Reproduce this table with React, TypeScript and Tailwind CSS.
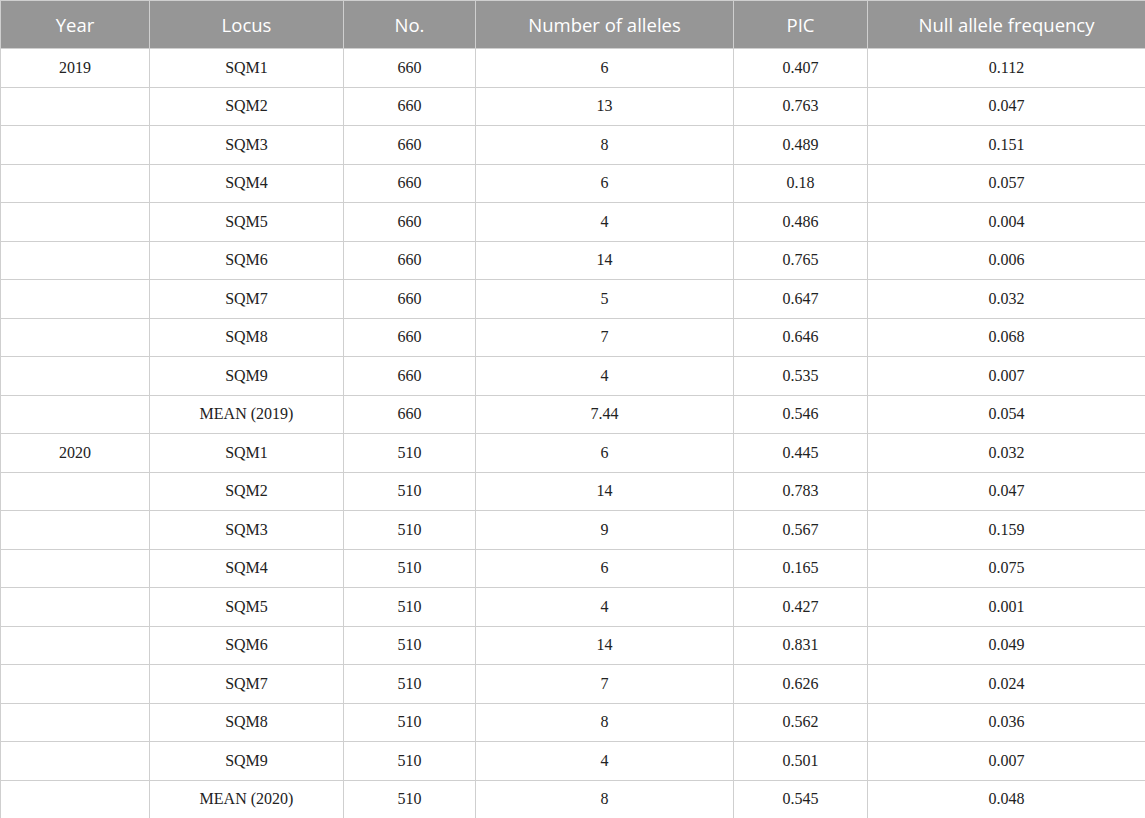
const cols = [
  { label: "Year", w: "w-[149px]" },
  { label: "Locus", w: "w-[194px]" },
  { label: "No.", w: "w-[132px]" },
  { label: "Number of alleles", w: "w-[258px]" },
  { label: "PIC", w: "w-[134px]" },
  { label: "Null allele frequency", w: "w-[278px]" },
];

type Row = [string, string, string, string, string, string];

const rows: Row[] = [
  ["2019", "SQM1", "660", "6", "0.407", "0.112"],
  ["", "SQM2", "660", "13", "0.763", "0.047"],
  ["", "SQM3", "660", "8", "0.489", "0.151"],
  ["", "SQM4", "660", "6", "0.18", "0.057"],
  ["", "SQM5", "660", "4", "0.486", "0.004"],
  ["", "SQM6", "660", "14", "0.765", "0.006"],
  ["", "SQM7", "660", "5", "0.647", "0.032"],
  ["", "SQM8", "660", "7", "0.646", "0.068"],
  ["", "SQM9", "660", "4", "0.535", "0.007"],
  ["", "MEAN (2019)", "660", "7.44", "0.546", "0.054"],
  ["2020", "SQM1", "510", "6", "0.445", "0.032"],
  ["", "SQM2", "510", "14", "0.783", "0.047"],
  ["", "SQM3", "510", "9", "0.567", "0.159"],
  ["", "SQM4", "510", "6", "0.165", "0.075"],
  ["", "SQM5", "510", "4", "0.427", "0.001"],
  ["", "SQM6", "510", "14", "0.831", "0.049"],
  ["", "SQM7", "510", "7", "0.626", "0.024"],
  ["", "SQM8", "510", "8", "0.562", "0.036"],
  ["", "SQM9", "510", "4", "0.501", "0.007"],
  ["", "MEAN (2020)", "510", "8", "0.545", "0.048"],
];

export default function App() {
  return (
    <div className="w-[1145px] h-[818px] bg-white overflow-hidden">
      <table className="w-[1145px] table-fixed border-collapse">
        <thead>
          <tr className="h-[48px] bg-[#969696]">
            {cols.map((c) => (
              <th
                key={c.label}
                className={`${c.w} border border-[#cfcfcf] text-center align-middle font-normal text-[18.5px] text-white font-['Open_Sans','Noto_Sans',sans-serif]`}
              >
                {c.label}
              </th>
            ))}
          </tr>
        </thead>
        <tbody>
          {rows.map((r, i) => (
            <tr key={i} className="h-[38.5px]">
              {r.map((cell, j) => (
                <td
                  key={j}
                  className="border border-[#cfcfcf] text-center align-middle text-[16px] text-[#222] font-['Liberation_Serif','Times_New_Roman',serif]"
                >
                  {cell}
                </td>
              ))}
            </tr>
          ))}
        </tbody>
      </table>
    </div>
  );
}
